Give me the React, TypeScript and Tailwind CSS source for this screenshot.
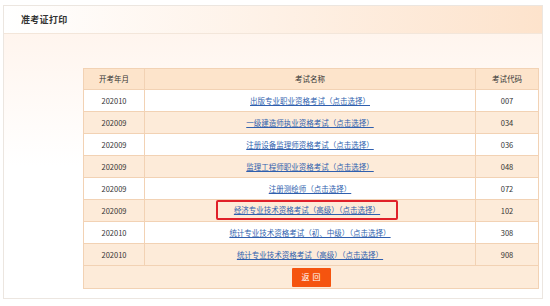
import React from "react"

const rows = [
  { date: "202010", name: "出版专业职业资格考试（点击选择）", code: "007" },
  { date: "202009", name: "一级建造师执业资格考试（点击选择）", code: "034" },
  { date: "202009", name: "注册设备监理师资格考试（点击选择）", code: "036" },
  { date: "202009", name: "监理工程师职业资格考试（点击选择）", code: "048" },
  { date: "202009", name: "注册测绘师（点击选择）", code: "072" },
  { date: "202009", name: "经济专业技术资格考试（高级）（点击选择）", code: "102", mark: true },
  { date: "202010", name: "统计专业技术资格考试（初、中级）（点击选择）", code: "308" },
  { date: "202010", name: "统计专业技术资格考试（高级）（点击选择）", code: "908" },
]

export default function App() {
  return (
    <div className="w-[550px] h-[306px] bg-white pt-[5px] pl-[3px] font-['SimSun','Noto_Sans_CJK_SC',sans-serif] text-[#333]">
      <div className="w-[540px] h-[294px] border border-[#ece6e0] flex flex-col">
        {/* title bar */}
        <div className="h-[28px] shrink-0 flex items-center pl-[17px] border-b border-[#f3e6da] bg-gradient-to-r from-white via-[#fef1e6] to-[#fde3cc]">
          <span className="text-[9px] font-bold text-[#333] tracking-[0.3px]">准考证打印</span>
        </div>
        <div className="flex-1 bg-gradient-to-b from-[#fff5ee] via-white to-white pt-[34px] pl-[79px] pr-[3px]">
          <div className="w-[456px] border border-[#f2d2b4] text-[7.5px]">
            {/* header row */}
            <div className="grid grid-cols-[61px_331px_62px] h-[21px] bg-[#fde4cb] border-b border-[#f2d2b4]">
              <div className="flex items-center justify-center border-r border-[#f2d2b4]">开考年月</div>
              <div className="flex items-center justify-center border-r border-[#f2d2b4]">考试名称</div>
              <div className="flex items-center justify-center">考试代码</div>
            </div>
            {rows.map((r, i) => (
              <div
                key={i}
                className={`grid grid-cols-[61px_331px_62px] h-[22px] border-b border-[#f2d2b4] ${i % 2 === 1 ? "bg-[#fdebd9]" : "bg-white"}`}
              >
                <div className="flex items-center justify-center border-r border-[#f2d2b4]">{r.date}</div>
                <div className="flex justify-center border-r border-[#f2d2b4]">
                  {r.mark ? (
                    <span className="flex items-center justify-center w-[182px] h-[20px] border-2 border-[#e0202a] rounded-[2px] -ml-[6px]">
                      <a href="#" className="text-[#2f5fae] underline">{r.name}</a>
                    </span>
                  ) : (
                    <span className="flex items-center">
                      <a href="#" className="text-[#2f5fae] underline">{r.name}</a>
                    </span>
                  )}
                </div>
                <div className="flex items-center justify-center">{r.code}</div>
              </div>
            ))}
            {/* button row */}
            <div className="h-[22px] bg-[#fdebd9] flex items-center justify-center">
              <button className="w-[39px] h-[19px] bg-[#f5540f] text-white text-[8px] tracking-[3px] pl-[3px] rounded-[1px]">
                返回
              </button>
            </div>
          </div>
        </div>
      </div>
    </div>
  )
}
